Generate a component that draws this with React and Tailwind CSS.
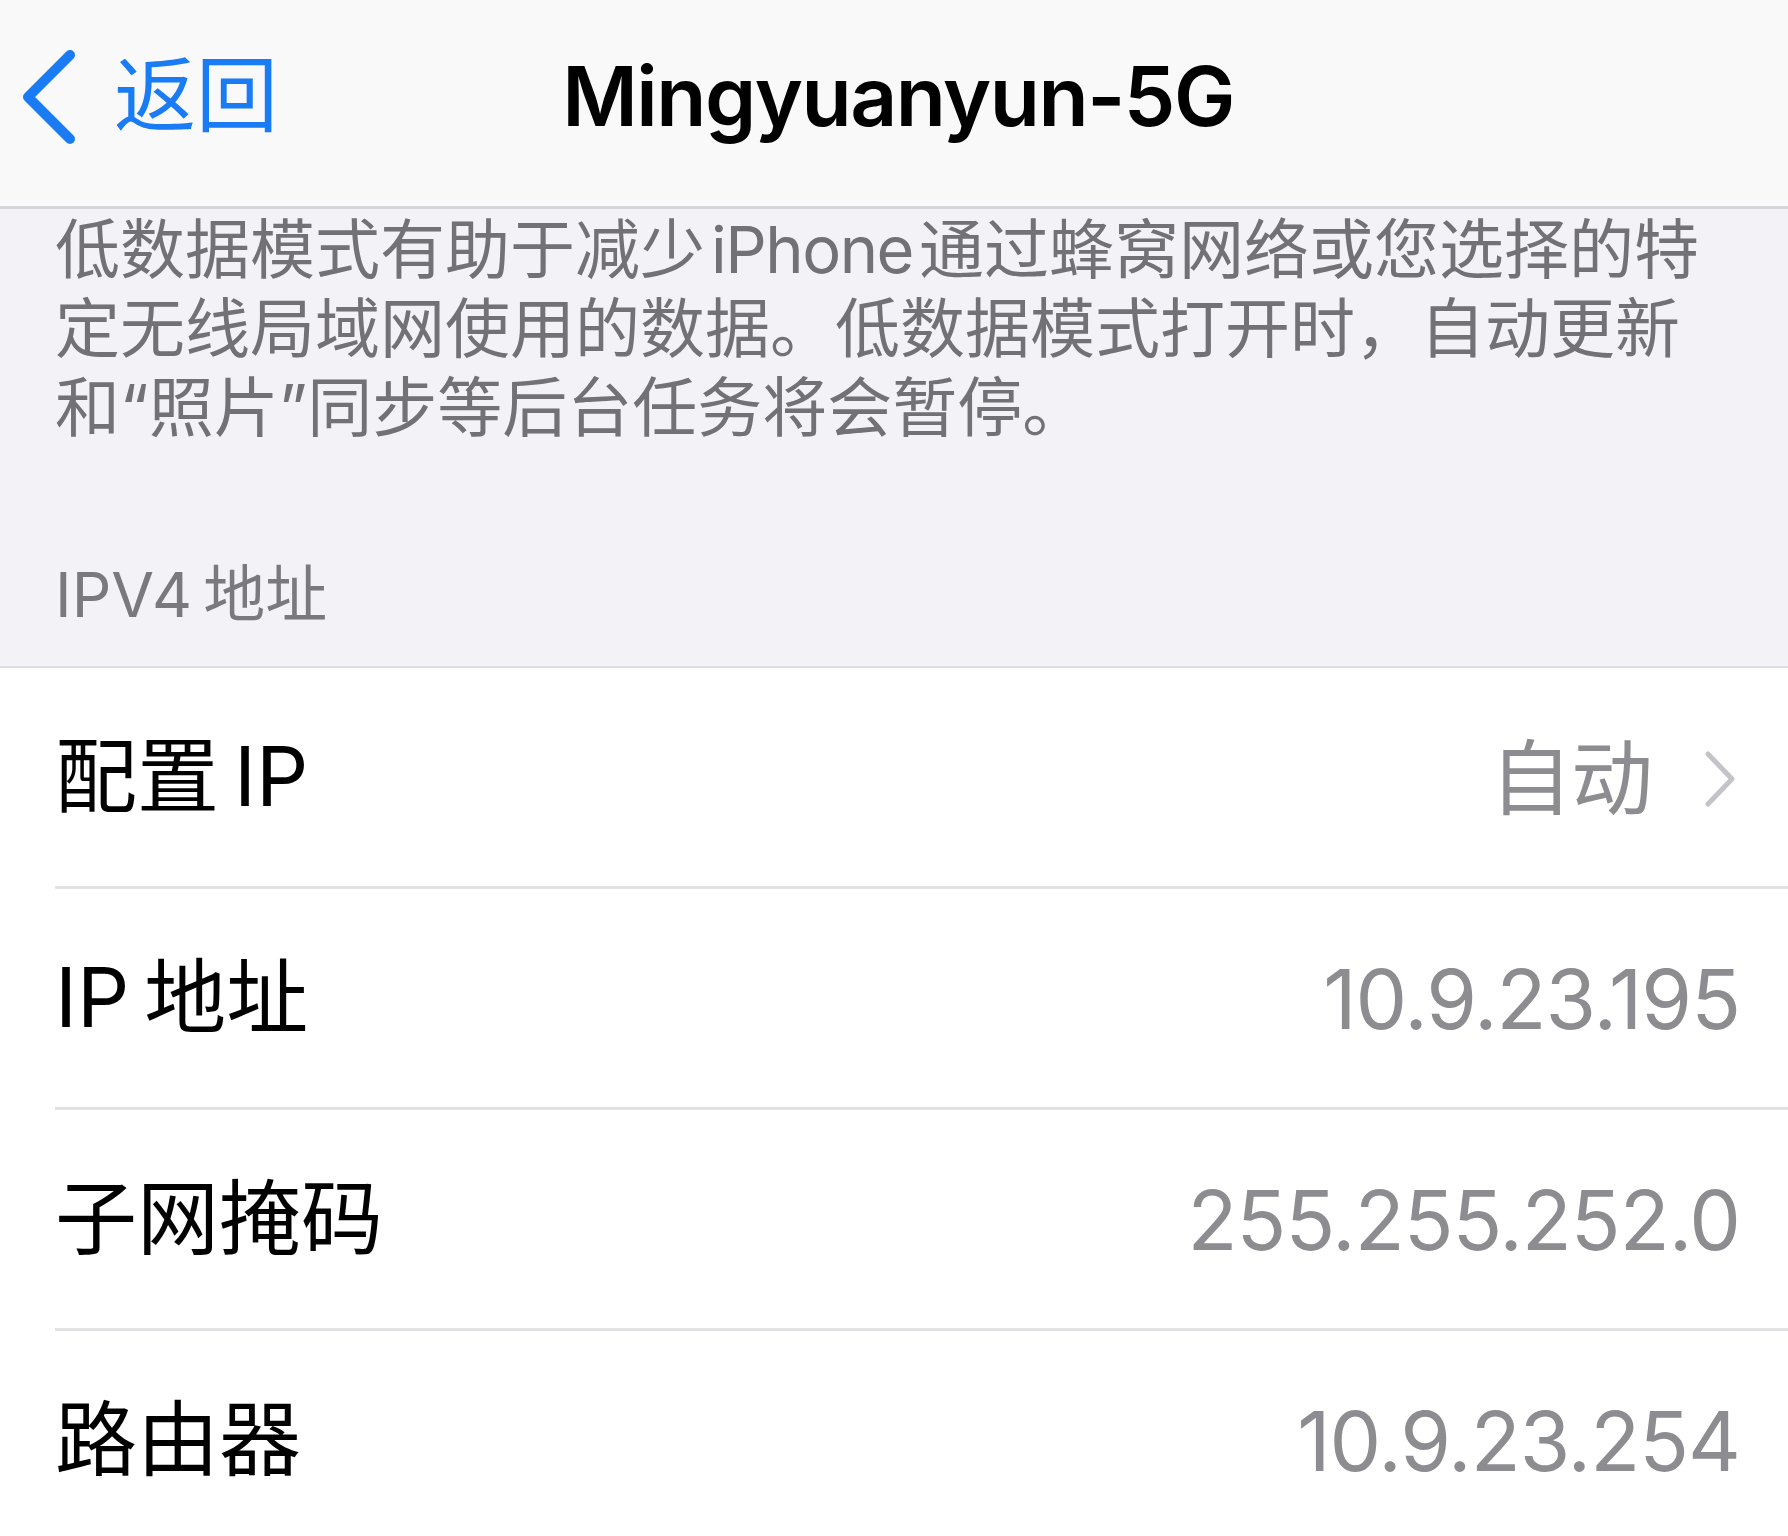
const rows = [
  { label: '配置\u2009IP', value: '自动', chevron: true },
  { label: 'IP\u2009地址', value: '10.9.23.195' },
  { label: '子网掩码', value: '255.255.252.0' },
  { label: '路由器', value: '10.9.23.254' },
]

const font = { fontFamily: 'Inter, "Noto Sans CJK SC", sans-serif' }

const BackChevron = () => (
  <svg width="62" height="96" viewBox="0 0 62 96" fill="none">
    <path d="M52 6 L10 48 L52 90" stroke="#1a7cf5" strokeWidth="10" strokeLinecap="round" strokeLinejoin="round" />
  </svg>
)

const RowChevron = () => (
  <svg width="40" height="62" viewBox="0 0 40 62" fill="none">
    <path d="M8 6 L32 31 L8 56" stroke="#c4c4c8" strokeWidth="5" strokeLinecap="round" strokeLinejoin="round" />
  </svg>
)

export default function App() {
  return (
    <div className="w-[1788px] h-[1536px] overflow-hidden bg-white" style={font}>
      {/* nav bar */}
      <div className="h-[209px] bg-[#f9f9fa] border-b-[3px] border-[#d6d6da] grid grid-cols-[1fr_auto_1fr] items-center pb-[12px]">
        <div className="flex items-center pl-[18px] gap-[34px] text-[#1a7cf5] text-[82px] leading-none">
          <BackChevron />
          <span className="-mt-[2px]">返回</span>
        </div>
        <h1 className="text-[82px] font-semibold text-black leading-none tracking-[-1.5px] pl-[8px]">Mingyuanyun-5G</h1>
        <div />
      </div>

      {/* footer text + section header */}
      <div className="bg-[#f2f2f7] pl-[55px] pr-[40px] pt-[1px] pb-[41px] border-b-[2px] border-[#dedee2]">
        <div className="text-[65px] leading-[79px] text-[#727276] whitespace-nowrap">
          <div>
            低数据模式有助于减少<span className="mx-[6px] tracking-[-1.5px]">iPhone</span>通过蜂窝网络或您选择的特
          </div>
          <div>定无线局域网使用的数据。低数据模式打开时，自动更新</div>
          <div>和“照片”同步等后台任务将会暂停。</div>
        </div>
        <div className="mt-[118px] text-[62px] leading-[60px] text-[#7a7a7e]">IPV4{'\u2009'}地址</div>
      </div>

      {/* list */}
      <div className="bg-white">
        {rows.map((row) => (
          <div key={row.label} className="pl-[55px]">
            <div className="h-[221px] flex items-center justify-between pr-[48px] border-b-[3px] border-[#e2e2e5]">
              <span className="text-[82px] text-black leading-none">{row.label}</span>
              <span className="flex items-center gap-[48px] text-[82px] text-[#8d8d91] leading-none tracking-[-1px] pt-[4px]">
                {row.value}
                {row.chevron && <RowChevron />}
              </span>
            </div>
          </div>
        ))}
      </div>
    </div>
  )
}
